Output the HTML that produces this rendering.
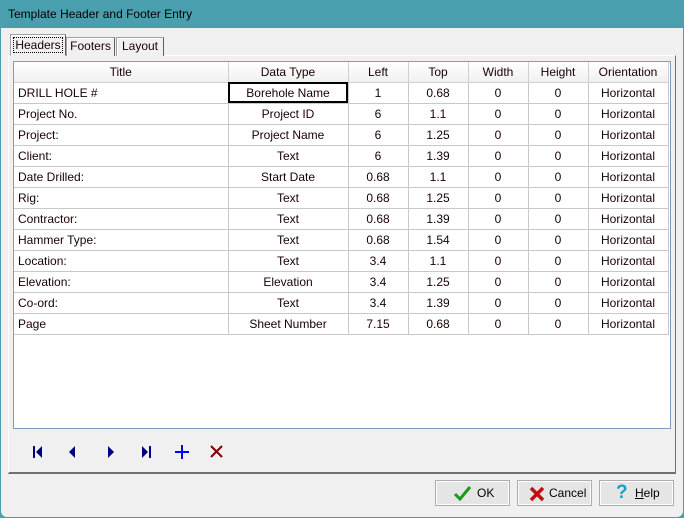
<!DOCTYPE html>
<html><head><style>
*{margin:0;padding:0;box-sizing:border-box}
body{width:684px;height:518px;background:#4a9fae;font-family:"Liberation Sans",sans-serif;font-size:12px;color:#1a0000;position:relative;overflow:hidden}
.win{position:absolute;left:1px;top:28px;width:682px;height:489px;background:#f0f0f0;border-radius:0 0 6px 6px}
.title{position:absolute;left:8px;top:7px;font-size:12px;color:#000}
.a{position:absolute}
.tab{position:absolute;border:1px solid #a0a0a0;border-bottom:none;background:#f0f0f0;text-align:center;border-right-color:#606060;box-shadow:inset 1px 1px 0 #fff}
.panel{position:absolute;left:8px;top:55px;width:668px;height:419px;border:1px solid #fff;border-right:1px solid #707070;border-bottom:2px solid #707070}
.grid{position:absolute;left:13px;top:61px;width:658px;height:368px;border:1px solid #7f9db9;background:#fff}
table{border-collapse:collapse;position:absolute;left:0;top:0}
td,th{height:21px;border:1px solid #c8c8c8;text-align:center;font-weight:normal;padding:0;white-space:nowrap}
th{background:linear-gradient(#fff,#f0f0f0);border-color:#d0d0d0;height:20px;border-top:none}
td.l{text-align:left;padding-left:4px}
tr td:first-child,tr th:first-child{border-left:none}
.btn{position:absolute;top:480px;width:75px;height:26px;border:1px solid #adadad;background:#e5e5e5;box-shadow:inset 0 0 0 1px #fdfdfd;font-size:12px;color:#000}
</style></head><body>
<div class="title">Template Header and Footer Entry</div>
<div class="win"></div>
<div class="panel"></div>
<div class="tab" style="left:66px;top:37px;width:49px;height:19px;line-height:17px">Footers</div>
<div class="tab" style="left:116px;top:37px;width:48px;height:19px;line-height:17px">Layout</div>
<div class="tab" style="left:10px;top:34px;width:56px;height:22px;line-height:20px;border-bottom:1px solid #f0f0f0"><span style="outline:1px dotted #000;padding:0 1px">Headers</span></div>
<div class="grid">
<table>
<tr><th style="width:214px">Title</th><th style="width:120px">Data Type</th><th style="width:60px">Left</th><th style="width:60px">Top</th><th style="width:60px">Width</th><th style="width:60px">Height</th><th style="width:80px">Orientation</th></tr>
<tr><td class="l">DRILL HOLE #</td><td style="outline:2px solid #000;outline-offset:-2px">Borehole Name</td><td>1</td><td>0.68</td><td>0</td><td>0</td><td>Horizontal</td></tr>
<tr><td class="l">Project No.</td><td>Project ID</td><td>6</td><td>1.1</td><td>0</td><td>0</td><td>Horizontal</td></tr>
<tr><td class="l">Project:</td><td>Project Name</td><td>6</td><td>1.25</td><td>0</td><td>0</td><td>Horizontal</td></tr>
<tr><td class="l">Client:</td><td>Text</td><td>6</td><td>1.39</td><td>0</td><td>0</td><td>Horizontal</td></tr>
<tr><td class="l">Date Drilled:</td><td>Start Date</td><td>0.68</td><td>1.1</td><td>0</td><td>0</td><td>Horizontal</td></tr>
<tr><td class="l">Rig:</td><td>Text</td><td>0.68</td><td>1.25</td><td>0</td><td>0</td><td>Horizontal</td></tr>
<tr><td class="l">Contractor:</td><td>Text</td><td>0.68</td><td>1.39</td><td>0</td><td>0</td><td>Horizontal</td></tr>
<tr><td class="l">Hammer Type:</td><td>Text</td><td>0.68</td><td>1.54</td><td>0</td><td>0</td><td>Horizontal</td></tr>
<tr><td class="l">Location:</td><td>Text</td><td>3.4</td><td>1.1</td><td>0</td><td>0</td><td>Horizontal</td></tr>
<tr><td class="l">Elevation:</td><td>Elevation</td><td>3.4</td><td>1.25</td><td>0</td><td>0</td><td>Horizontal</td></tr>
<tr><td class="l">Co-ord:</td><td>Text</td><td>3.4</td><td>1.39</td><td>0</td><td>0</td><td>Horizontal</td></tr>
<tr><td class="l">Page</td><td>Sheet Number</td><td>7.15</td><td>0.68</td><td>0</td><td>0</td><td>Horizontal</td></tr>
</table></div>
<svg class="a" style="left:0;top:440px" width="240" height="26">
<g fill="#000080"><rect x="33" y="6" width="2" height="12"/><polygon points="36,12 42,6 42,18"/>
<polygon points="69,12 75,6 75,18"/>
<polygon points="114,12 108,6 108,18"/>
<polygon points="148,12 142,6 142,18"/><rect x="149" y="6" width="2" height="12"/></g>
<g fill="#0000ff"><rect x="175" y="11" width="14" height="2"/><rect x="181" y="5" width="2" height="14"/></g>
<g stroke="#800000" stroke-width="2"><line x1="211" y1="6" x2="222" y2="17"/><line x1="222" y1="6" x2="211" y2="17"/></g>
</svg>
<div class="btn" style="left:435px"><svg class="a" style="left:18px;top:4px" width="18" height="16"><path d="M1 9 L6 14 L16 2" stroke="#1a9a1a" stroke-width="3" fill="none"/></svg><span class="a" style="left:41px;top:5px">OK</span></div>
<div class="btn" style="left:517px"><svg class="a" style="left:11px;top:5px" width="16" height="16"><g stroke="#c01010" stroke-width="3.5"><line x1="2" y1="2" x2="14" y2="14"/><line x1="14" y1="2" x2="2" y2="14"/></g></svg><span class="a" style="left:31px;top:5px">Cancel</span></div>
<div class="btn" style="left:599px"><span class="a" style="left:16px;top:1px;font-size:19px;font-weight:bold;color:#1aa0c0">?</span><span class="a" style="left:35px;top:5px"><u>H</u>elp</span></div>
</body></html>
